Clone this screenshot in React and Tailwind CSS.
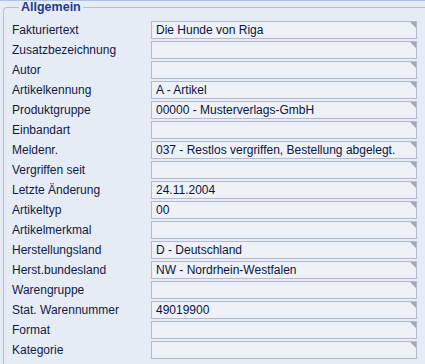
const rows = [
  ["Fakturiertext", "Die Hunde von Riga"],
  ["Zusatzbezeichnung", ""],
  ["Autor", ""],
  ["Artikelkennung", "A - Artikel"],
  ["Produktgruppe", "00000 - Musterverlags-GmbH"],
  ["Einbandart", ""],
  ["Meldenr.", "037 - Restlos vergriffen, Bestellung abgelegt."],
  ["Vergriffen seit", ""],
  ["Letzte Änderung", "24.11.2004"],
  ["Artikeltyp", "00"],
  ["Artikelmerkmal", ""],
  ["Herstellungsland", "D - Deutschland"],
  ["Herst.bundesland", "NW - Nordrhein-Westfalen"],
  ["Warengruppe", ""],
  ["Stat. Warennummer", "49019900"],
  ["Format", ""],
  ["Kategorie", ""],
];

export default function App() {
  return (
    <div
      className="w-[425px] h-[364px] overflow-hidden bg-[#e6ecf6] border-t border-[#a9c4e8] pl-[3px]"
      style={{ fontFamily: '"Liberation Sans", Arial, sans-serif' }}
    >
      <fieldset className="border-t border-l border-[#b9bfcc] rounded-tl-[4px] h-[400px] pl-[8px]">
        <legend className="ml-[7px] px-[2px] text-[12.5px] leading-[13px] font-bold text-[#1e3c8c]">
          Allgemein
        </legend>
        <div className="flex flex-col gap-[2px] pt-[7px]">
          {rows.map(([label, value]) => (
            <Row key={label} label={label} value={value} />
          ))}
        </div>
      </fieldset>
    </div>
  );
}

function Row({ label, value }) {
  return (
    <div className="flex items-center h-[18px]">
      <span className="w-[139px] shrink-0 text-[12px] text-[#101a44] whitespace-nowrap">{label}</span>
      <div className="relative w-[266px] h-[18px] bg-[#eef1f8] border border-[#b5bacb] pl-[4px] pr-[6px] flex items-center overflow-hidden">
        <span className="text-[12px] text-[#0a153c] whitespace-nowrap">{value}</span>
        <svg className="absolute top-0 right-0" width="6" height="6" viewBox="0 0 6 6">
          <polygon points="0,0 6,0 6,6" fill="#a3a8bb" />
        </svg>
      </div>
    </div>
  );
}
